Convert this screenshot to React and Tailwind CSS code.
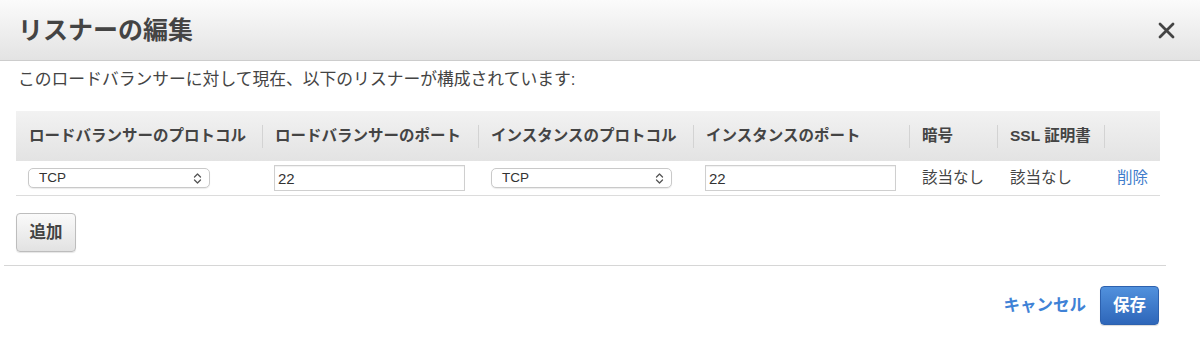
export default function App() {
  const font = { fontFamily: '"Liberation Sans", "Noto Sans CJK JP", sans-serif' };
  const cols = "grid grid-cols-[246px_216px_215px_216px_88px_107px_56px]";
  const headers = [
    "ロードバランサーのプロトコル",
    "ロードバランサーのポート",
    "インスタンスのプロトコル",
    "インスタンスのポート",
    "暗号",
    "SSL 証明書",
    "",
  ];

  const Select = ({ w }) => (
    <div
      className={`${w} h-[20px] flex items-center justify-between rounded-[5px] border border-[#c9c9c9] bg-white pl-[10px] pr-[7px] shadow-[0_1px_1px_rgba(0,0,0,0.08)]`}
    >
      <span className="text-[13.5px] text-[#333] leading-none">TCP</span>
      <svg width="9" height="13" viewBox="0 0 9 13" fill="none">
        <path d="M1.5 5 L4.5 2 L7.5 5" stroke="#555" strokeWidth="1.3" strokeLinecap="round" strokeLinejoin="round" />
        <path d="M1.5 8 L4.5 11 L7.5 8" stroke="#555" strokeWidth="1.3" strokeLinecap="round" strokeLinejoin="round" />
      </svg>
    </div>
  );

  const Input = () => (
    <div className="w-[191px] h-[26px] flex items-center border border-[#cfcfcf] bg-white pl-[3px] shadow-[inset_0_1px_1px_rgba(0,0,0,0.06)]">
      <span className="text-[15px] text-[#333] leading-none">22</span>
    </div>
  );

  return (
    <div className="w-[1200px] h-[339px] bg-white text-[#444] overflow-hidden" style={font}>
      {/* Header */}
      <div className="h-[61px] flex items-center justify-between pl-[18px] pr-[25px] bg-gradient-to-b from-[#fbfbfb] to-[#e3e3e3] border-b border-[#cdcdcd]">
        <h1 className="text-[25px] font-bold leading-none text-[#444]">リスナーの編集</h1>
        <svg width="17" height="17" viewBox="0 0 17 17">
          <path d="M2 2 L15 15 M15 2 L2 15" stroke="#444" strokeWidth="2.8" strokeLinecap="round" />
        </svg>
      </div>

      {/* Body */}
      <div className="px-[16px]">
        <p className="mt-[7px] pl-[2px] text-[16.8px] leading-[24px]">
          このロードバランサーに対して現在、以下のリスナーが構成されています:
        </p>

        <div className="mt-[19px] w-[1144px]">
          <div className={`${cols} h-[50px] bg-gradient-to-b from-[#f2f2f2] to-[#e3e3e3]`}>
            {headers.map((h, i) => (
              <div key={i} className="flex items-center">
                {i > 0 && <div className="w-px h-[23px] bg-[#d3d3d3]" />}
                <span className={`${i === 0 ? "ml-[13px]" : "ml-[12px]"} text-[15.5px] font-bold whitespace-nowrap`}>
                  {h}
                </span>
              </div>
            ))}
          </div>
          <div className={`${cols} h-[35px] border-b border-[#dcdcdc] items-center text-[15.5px]`}>
            <div className="pl-[12px]"><Select w="w-[182px]" /></div>
            <div className="pl-[12px]"><Input /></div>
            <div className="pl-[13px]"><Select w="w-[181px]" /></div>
            <div className="pl-[12px]"><Input /></div>
            <div className="pl-[13px] whitespace-nowrap">該当なし</div>
            <div className="pl-[13px] whitespace-nowrap">該当なし</div>
            <div className="pl-[13px] whitespace-nowrap text-[#3f7ccb]">削除</div>
          </div>
        </div>

        <button className="mt-[17px] w-[60px] h-[39px] flex items-center justify-center rounded-[4px] border border-[#bdbdbd] bg-gradient-to-b from-[#fafafa] to-[#e2e2e2] text-[16.5px] font-bold text-[#444] shadow-[0_1px_1px_rgba(0,0,0,0.1)]">
          追加
        </button>
      </div>

      <div className="mt-[13px] ml-[4px] w-[1162px] h-px bg-[#d6d6d6]" />

      {/* Footer */}
      <div className="mt-[20px] flex items-center justify-end gap-[14px] pr-[41px]">
        <span className="text-[16.5px] font-bold text-[#3f82d6]">キャンセル</span>
        <button className="w-[59px] h-[39px] flex items-center justify-center rounded-[4px] border border-[#2d61ae] bg-gradient-to-b from-[#5191dd] to-[#2e66b9] text-[16.5px] font-bold text-white shadow-[0_1px_1px_rgba(0,0,0,0.15)]">
          保存
        </button>
      </div>
    </div>
  );
}
